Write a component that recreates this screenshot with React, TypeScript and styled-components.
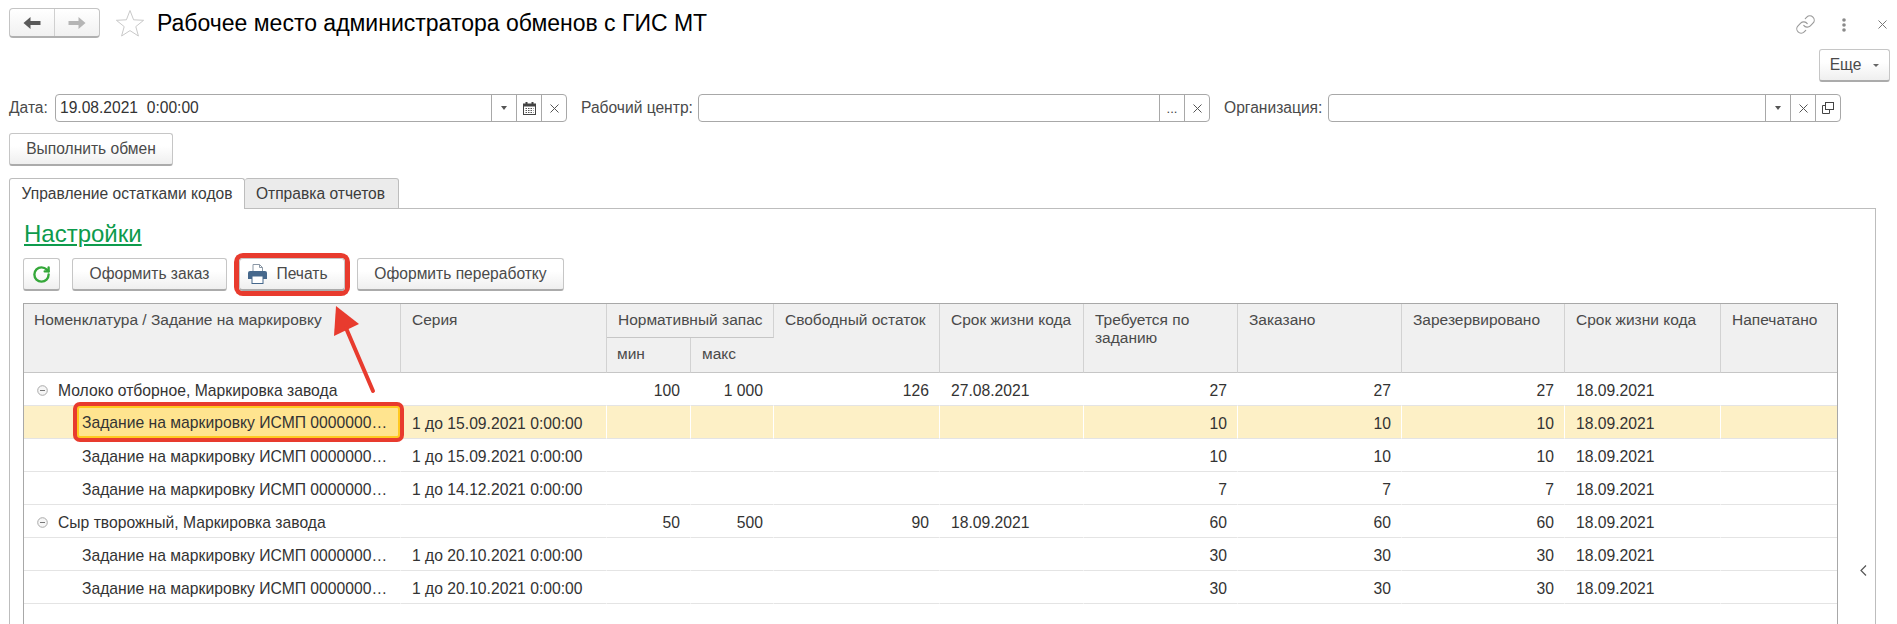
import React from "react";
import styled, { createGlobalStyle } from "styled-components";
import { Link, RotateCw } from "lucide-react";

const GlobalStyle = createGlobalStyle`
  html, body {
    margin: 0;
    padding: 0;
    background: #fff;
    overflow: hidden;
  }
  body {
    font-family: "Liberation Sans", Arial, sans-serif;
    font-size: 15.6px;
    color: #4a4a4a;
  }
`;

const Page = styled.div`
  position: relative;
  width: 1897px;
  height: 624px;
  box-sizing: border-box;
  padding: 8px 7px 0 9px;
  overflow: hidden;
`;

const HeaderRow = styled.div`
  display: flex;
  align-items: center;
  height: 30px;
`;

const NavGroup = styled.div`
  display: flex;
  width: 91px;
  height: 30px;
  box-sizing: border-box;
  border: 1px solid #c4c4c4;
  border-bottom: 2px solid #b0b0b0;
  border-radius: 4px;
  background: linear-gradient(#ffffff, #f1f1f1);
`;

const NavPart = styled.div<{ $first?: boolean }>`
  flex: 1;
  display: flex;
  align-items: center;
  justify-content: center;
  border-right: ${(p) => (p.$first ? "1px solid #d0d0d0" : "none")};
`;

const StarWrap = styled.div`
  display: flex;
  margin-left: 15px;
`;

const Title = styled.h1`
  margin: 0 0 0 12px;
  font-size: 23px;
  font-weight: 400;
  color: #000;
  white-space: nowrap;
  flex: 1;
`;

const HeaderIcons = styled.div`
  display: flex;
  align-items: center;
  width: 95px;
  margin-top: 3px;
`;

const HeaderIconGap = styled.span<{ $w: number }>`
  width: ${(p) => p.$w}px;
`;

const CommandRow = styled.div`
  display: flex;
  justify-content: flex-end;
  margin-top: 11px;
`;

const Button = styled.button<{ $w: number; $hot?: boolean }>`
  display: flex;
  align-items: center;
  justify-content: center;
  gap: 9px;
  width: ${(p) => p.$w}px;
  height: 33px;
  box-sizing: border-box;
  padding: 0 ${(p) => (p.$hot ? "8px" : "0")} 0 0;
  border: 1px solid #c6c6c6;
  border-bottom: 2px solid #ababab;
  border-radius: ${(p) => (p.$hot ? "4px" : "3px")};
  background: linear-gradient(#ffffff 40%, #efefef);
  font-family: inherit;
  font-size: 15.6px;
  color: #4a4a4a;
  white-space: nowrap;
  box-shadow: ${(p) => (p.$hot ? "0 0 0 5px #e83b2e" : "none")};
`;

const MoreCaret = styled.span`
  width: 0;
  height: 0;
  margin-left: 3px;
  border-left: 3px solid transparent;
  border-right: 3px solid transparent;
  border-top: 3px solid #666;
`;

const FilterRow = styled.div`
  display: flex;
  align-items: center;
  margin-top: 12px;
  height: 28px;
`;

const FieldLabel = styled.label<{ $w: number }>`
  width: ${(p) => p.$w}px;
  flex: none;
  white-space: nowrap;
  font-size: 15.6px;
  color: #4a4a4a;
`;

const Field = styled.div<{ $w: number; $gap: number }>`
  display: flex;
  flex: none;
  width: ${(p) => p.$w}px;
  height: 28px;
  margin-right: ${(p) => p.$gap}px;
  box-sizing: border-box;
  border: 1px solid #a8a8a8;
  border-radius: 4px;
  background: #fff;
`;

const FieldValue = styled.div`
  flex: 1;
  padding-left: 4px;
  line-height: 26px;
  font-size: 15.6px;
  color: #333;
  white-space: pre;
`;

const FieldAddon = styled.div<{ $dots?: boolean }>`
  display: flex;
  align-items: ${(p) => (p.$dots ? "flex-end" : "center")};
  justify-content: center;
  width: 25px;
  flex: none;
  box-sizing: border-box;
  padding-bottom: ${(p) => (p.$dots ? "5px" : "0")};
  border-left: 1px solid #a8a8a8;
  font-size: 13px;
  color: #444;
`;

const DownCaret = styled.span`
  width: 0;
  height: 0;
  border-left: 3.5px solid transparent;
  border-right: 3.5px solid transparent;
  border-top: 4px solid #555;
`;

const ExchangeRow = styled.div`
  margin-top: 11px;
`;

const TabBar = styled.div`
  display: flex;
  margin-top: 12px;
  height: 31px;
`;

const Tab = styled.div<{ $active?: boolean; $w: number }>`
  width: ${(p) => p.$w}px;
  box-sizing: border-box;
  padding-right: ${(p) => (p.$active ? "0" : "2px")};
  border: 1px solid #bdbdbd;
  border-bottom: ${(p) => (p.$active ? "none" : "1px solid #bdbdbd")};
  border-left: ${(p) => (p.$active ? "1px solid #bdbdbd" : "none")};
  border-radius: 3px 3px 0 0;
  background: ${(p) => (p.$active ? "#fff" : "#ebebeb")};
  text-align: center;
  line-height: 29px;
  font-size: 15.6px;
  color: #3c3c3c;
  white-space: nowrap;
`;

const TabRest = styled.div`
  flex: 1;
  margin-right: 14px;
  border-bottom: 1px solid #bdbdbd;
`;

const Panel = styled.div`
  display: flex;
  width: 1867px;
  height: 415px;
  box-sizing: border-box;
  border-left: 1px solid #bdbdbd;
  border-right: 1px solid #bdbdbd;
  padding-left: 13px;
`;

const PanelMain = styled.div`
  width: 1815px;
  flex: none;
`;

const SettingsLink = styled.a`
  display: block;
  margin: 12px 0 0 1px;
  height: 26px;
  line-height: 26px;
  font-size: 24px;
  color: #0d9b4c;
  text-decoration: underline;
`;

const Toolbar = styled.div`
  display: flex;
  gap: 12px;
  margin-top: 11px;
`;

const TableFrame = styled.div`
  margin-top: 12px;
  height: 330px;
  box-sizing: border-box;
  border-top: 1px solid #a8a8a8;
  border-left: 1px solid #a8a8a8;
  border-right: 1px solid #a8a8a8;
`;

const Table = styled.table`
  width: 1813px;
  table-layout: fixed;
  border-collapse: separate;
  border-spacing: 0;
  font-size: 15.7px;
`;

const Th = styled.th<{ $h?: number }>`
  height: ${(p) => (p.$h ? `${p.$h}px` : "auto")};
  box-sizing: border-box;
  padding: 7px 4px 0 11px;
  background: #f0f0f0;
  border-right: 1px solid #d2d2d2;
  border-bottom: 1px solid #c6c6c6;
  vertical-align: top;
  text-align: left;
  font-size: 15.5px;
  font-weight: 400;
  line-height: 18px;
  color: #4a4a4a;

  &:first-child {
    padding-left: 10px;
  }

  &:last-child {
    border-right: none;
  }
`;

const Tr = styled.tr<{ $selected?: boolean }>`
  background: ${(p) => (p.$selected ? "#fdf0c6" : "#fff")};
`;

const Td = styled.td<{ $right?: boolean; $selected?: boolean }>`
  position: relative;
  height: 33px;
  box-sizing: border-box;
  padding: ${(p) => (p.$right ? "3px 10px 0 4px" : "3px 4px 0 11px")};
  border-bottom: 1px solid #e4e4e4;
  border-right: 1px solid ${(p) => (p.$selected ? "#fff" : "transparent")};
  text-align: ${(p) => (p.$right ? "right" : "left")};
  white-space: nowrap;
  color: #333;

  &:last-child {
    border-right: none;
  }
`;

const FirstTd = styled(Td)`
  padding-left: 0;
  padding-right: 0;
`;

const TreeCell = styled.div<{ $indent: number }>`
  display: flex;
  align-items: center;
  gap: 10px;
  padding-left: ${(p) => p.$indent}px;
`;

const CurrentCell = styled.div`
  position: absolute;
  left: 53px;
  right: 0;
  top: 0;
  bottom: 0;
  z-index: 2;
  display: flex;
  align-items: center;
  box-sizing: border-box;
  padding: 2px 0 0 3px;
  border: 2px solid #ffc820;
  border-radius: 3px;
  background: #ffe48f;
  box-shadow: 0 0 0 4px #e83b2e;
  color: #333;
`;

const Collapse = styled.div`
  flex: 1;
  display: flex;
  justify-content: center;
  padding: 356px 0 0 14px;
  color: #555;
`;

const CallArrow = styled.svg`
  position: absolute;
  left: 325px;
  top: 300px;
  z-index: 3;
`;

const BackIcon = ({ color }: { color: string }) => (
  <svg width="18" height="14" viewBox="0 0 18 14">
    <path d="M0.5 7 L7.5 1 V5 H17.5 V9 H7.5 V13 Z" fill={color} />
  </svg>
);

const ForwardIcon = ({ color }: { color: string }) => (
  <svg width="18" height="14" viewBox="0 0 18 14">
    <path d="M17.5 7 L10.5 1 V5 H0.5 V9 H10.5 V13 Z" fill={color} />
  </svg>
);

const StarIcon = () => (
  <svg width="30" height="28" viewBox="0 0 30 28">
    <path
      d="M15 1.5 L18.6 10.8 L28.6 11.3 L20.8 17.6 L23.4 27 L15 21.6 L6.6 27 L9.2 17.6 L1.4 11.3 L11.4 10.8 Z"
      fill="#fff"
      stroke="#c9c9c9"
      strokeWidth="1"
    />
  </svg>
);

const CrossIcon = ({ size = 9, color = "#555" }: { size?: number; color?: string }) => (
  <svg width={size} height={size} viewBox="0 0 9 9">
    <path d="M0.5 0.5 L8.5 8.5 M8.5 0.5 L0.5 8.5" stroke={color} strokeWidth="1" fill="none" />
  </svg>
);

const DotsIcon = () => (
  <svg width="4" height="14" viewBox="0 0 4 14">
    <circle cx="2" cy="2" r="1.8" fill="#8a8a8a" />
    <circle cx="2" cy="7" r="1.8" fill="#8a8a8a" />
    <circle cx="2" cy="12" r="1.8" fill="#8a8a8a" />
  </svg>
);

const CalendarIcon = () => (
  <svg width="13" height="13" viewBox="0 0 13 13">
    <rect x="0.5" y="2" width="12" height="10.5" fill="#fff" stroke="#444" />
    <rect x="0.5" y="2" width="12" height="2.5" fill="#444" />
    <rect x="2.5" y="0" width="2" height="3" fill="#444" />
    <rect x="8.5" y="0" width="2" height="3" fill="#444" />
    <path d="M2.5 6.5 H10.5 M2.5 8.5 H10.5 M2.5 10.5 H10.5" stroke="#555" strokeDasharray="1.5 1" />
  </svg>
);

const OpenIcon = () => (
  <svg width="12" height="12" viewBox="0 0 12 12" fill="none" stroke="#444">
    <rect x="3.5" y="0.5" width="8" height="7" />
    <path d="M3.5 3.5 H0.5 V11.5 H7.5 V7.5" />
  </svg>
);

const PrinterIcon = () => (
  <svg width="19" height="20" viewBox="0 0 19 20">
    <path d="M5 0.5 H11.5 L14.5 3.5 V9 H5 Z" fill="#fff" stroke="#8a97a5" />
    <path d="M11.5 0.5 V3.5 H14.5" fill="none" stroke="#8a97a5" />
    <path d="M2 7 H17 Q19 7 19 9 V15 H0 V9 Q0 7 2 7 Z" fill="#46688c" />
    <rect x="4" y="12" width="11" height="7.5" fill="#fff" stroke="#46688c" />
  </svg>
);

const ExpanderIcon = () => (
  <svg width="11" height="11" viewBox="0 0 11 11" style={{ flex: "none" }}>
    <circle cx="5.5" cy="5.5" r="4.8" fill="#f6f6f6" stroke="#a9a9a9" />
    <path d="M3 5.5 H8" stroke="#777" />
  </svg>
);

const ChevronIcon = () => (
  <svg width="7" height="11" viewBox="0 0 7 11" fill="none" stroke="#555" strokeWidth="1.2">
    <path d="M6 0.5 L1 5.5 L6 10.5" />
  </svg>
);

type Row = {
  name: string;
  group?: boolean;
  selected?: boolean;
  series: string;
  min: string;
  max: string;
  free: string;
  life: string;
  need: string;
  ordered: string;
  reserved: string;
  life2: string;
};

const task = "Задание на маркировку ИСМП 0000000…";
const rows: Row[] = [
  { name: "Молоко отборное, Маркировка завода", group: true, series: "", min: "100", max: "1 000", free: "126", life: "27.08.2021", need: "27", ordered: "27", reserved: "27", life2: "18.09.2021" },
  { name: task, selected: true, series: "1 до 15.09.2021 0:00:00", min: "", max: "", free: "", life: "", need: "10", ordered: "10", reserved: "10", life2: "18.09.2021" },
  { name: task, series: "1 до 15.09.2021 0:00:00", min: "", max: "", free: "", life: "", need: "10", ordered: "10", reserved: "10", life2: "18.09.2021" },
  { name: task, series: "1 до 14.12.2021 0:00:00", min: "", max: "", free: "", life: "", need: "7", ordered: "7", reserved: "7", life2: "18.09.2021" },
  { name: "Сыр творожный, Маркировка завода", group: true, series: "", min: "50", max: "500", free: "90", life: "18.09.2021", need: "60", ordered: "60", reserved: "60", life2: "18.09.2021" },
  { name: task, series: "1 до 20.10.2021 0:00:00", min: "", max: "", free: "", life: "", need: "30", ordered: "30", reserved: "30", life2: "18.09.2021" },
  { name: task, series: "1 до 20.10.2021 0:00:00", min: "", max: "", free: "", life: "", need: "30", ordered: "30", reserved: "30", life2: "18.09.2021" },
];

const columns = [377, 206, 84, 83, 166, 144, 154, 164, 163, 156, 116];

const App: React.FC = () => {
  return (
    <Page>
      <GlobalStyle />
      <HeaderRow>
        <NavGroup>
          <NavPart $first>
            <BackIcon color="#5a5a5a" />
          </NavPart>
          <NavPart>
            <ForwardIcon color="#b5b5b5" />
          </NavPart>
        </NavGroup>
        <StarWrap>
          <StarIcon />
        </StarWrap>
        <Title>Рабочее место администратора обменов с ГИС МТ</Title>
        <HeaderIcons>
          <Link size={21} color="#9a9a9a" strokeWidth={1.3} />
          <HeaderIconGap $w={26} />
          <DotsIcon />
          <HeaderIconGap $w={32} />
          <CrossIcon size={9} color="#777" />
        </HeaderIcons>
      </HeaderRow>

      <CommandRow>
        <Button $w={71}>
          Еще
          <MoreCaret />
        </Button>
      </CommandRow>

      <FilterRow>
        <FieldLabel $w={46}>Дата:</FieldLabel>
        <Field $w={512} $gap={14}>
          <FieldValue>19.08.2021  0:00:00</FieldValue>
          <FieldAddon><DownCaret /></FieldAddon>
          <FieldAddon><CalendarIcon /></FieldAddon>
          <FieldAddon><CrossIcon /></FieldAddon>
        </Field>
        <FieldLabel $w={117}>Рабочий центр:</FieldLabel>
        <Field $w={512} $gap={14}>
          <FieldValue />
          <FieldAddon $dots>...</FieldAddon>
          <FieldAddon><CrossIcon /></FieldAddon>
        </Field>
        <FieldLabel $w={104}>Организация:</FieldLabel>
        <Field $w={513} $gap={0}>
          <FieldValue />
          <FieldAddon><DownCaret /></FieldAddon>
          <FieldAddon><CrossIcon /></FieldAddon>
          <FieldAddon><OpenIcon /></FieldAddon>
        </Field>
      </FilterRow>

      <ExchangeRow>
        <Button $w={164}>Выполнить обмен</Button>
      </ExchangeRow>

      <TabBar>
        <Tab $active $w={236}>Управление остатками кодов</Tab>
        <Tab $w={154}>Отправка отчетов</Tab>
        <TabRest />
      </TabBar>

      <Panel>
        <PanelMain>
          <SettingsLink>Настройки</SettingsLink>
          <Toolbar>
            <Button $w={37}>
              <RotateCw size={19} color="#35a83a" strokeWidth={3} />
            </Button>
            <Button $w={155}>Оформить заказ</Button>
            <Button $w={106} $hot>
              <PrinterIcon />
              Печать
            </Button>
            <Button $w={207}>Оформить переработку</Button>
          </Toolbar>

          <TableFrame>
            <Table>
              <colgroup>
                {columns.map((w, i) => (
                  <col key={i} style={{ width: w }} />
                ))}
              </colgroup>
              <thead>
                <tr>
                  <Th rowSpan={2}>Номенклатура / Задание на маркировку</Th>
                  <Th rowSpan={2}>Серия</Th>
                  <Th colSpan={2} $h={34}>Нормативный запас</Th>
                  <Th rowSpan={2}>Свободный остаток</Th>
                  <Th rowSpan={2}>Срок жизни кода</Th>
                  <Th rowSpan={2}>Требуется по заданию</Th>
                  <Th rowSpan={2}>Заказано</Th>
                  <Th rowSpan={2}>Зарезервировано</Th>
                  <Th rowSpan={2}>Срок жизни кода</Th>
                  <Th rowSpan={2}>Напечатано</Th>
                </tr>
                <tr>
                  <Th $h={35}>мин</Th>
                  <Th $h={35}>макс</Th>
                </tr>
              </thead>
              <tbody>
                {rows.map((r, i) => (
                  <Tr key={i} $selected={r.selected}>
                    <FirstTd $selected={r.selected}>
                      {r.selected ? (
                        <CurrentCell>{r.name}</CurrentCell>
                      ) : (
                        <TreeCell $indent={r.group ? 13 : 58}>
                          {r.group && <ExpanderIcon />}
                          {r.name}
                        </TreeCell>
                      )}
                    </FirstTd>
                    <Td $selected={r.selected}>{r.series}</Td>
                    <Td $right $selected={r.selected}>{r.min}</Td>
                    <Td $right $selected={r.selected}>{r.max}</Td>
                    <Td $right $selected={r.selected}>{r.free}</Td>
                    <Td $selected={r.selected}>{r.life}</Td>
                    <Td $right $selected={r.selected}>{r.need}</Td>
                    <Td $right $selected={r.selected}>{r.ordered}</Td>
                    <Td $right $selected={r.selected}>{r.reserved}</Td>
                    <Td $selected={r.selected}>{r.life2}</Td>
                    <Td />
                  </Tr>
                ))}
              </tbody>
            </Table>
          </TableFrame>
        </PanelMain>
        <Collapse>
          <ChevronIcon />
        </Collapse>
      </Panel>

      <CallArrow width="60" height="100" viewBox="0 0 60 100">
        <path d="M11 6 L9 36 L34 24 Z" fill="#e83b2e" />
        <path d="M21 28 L48 91" stroke="#e83b2e" strokeWidth="4" strokeLinecap="round" />
      </CallArrow>
    </Page>
  );
};

export default App;
